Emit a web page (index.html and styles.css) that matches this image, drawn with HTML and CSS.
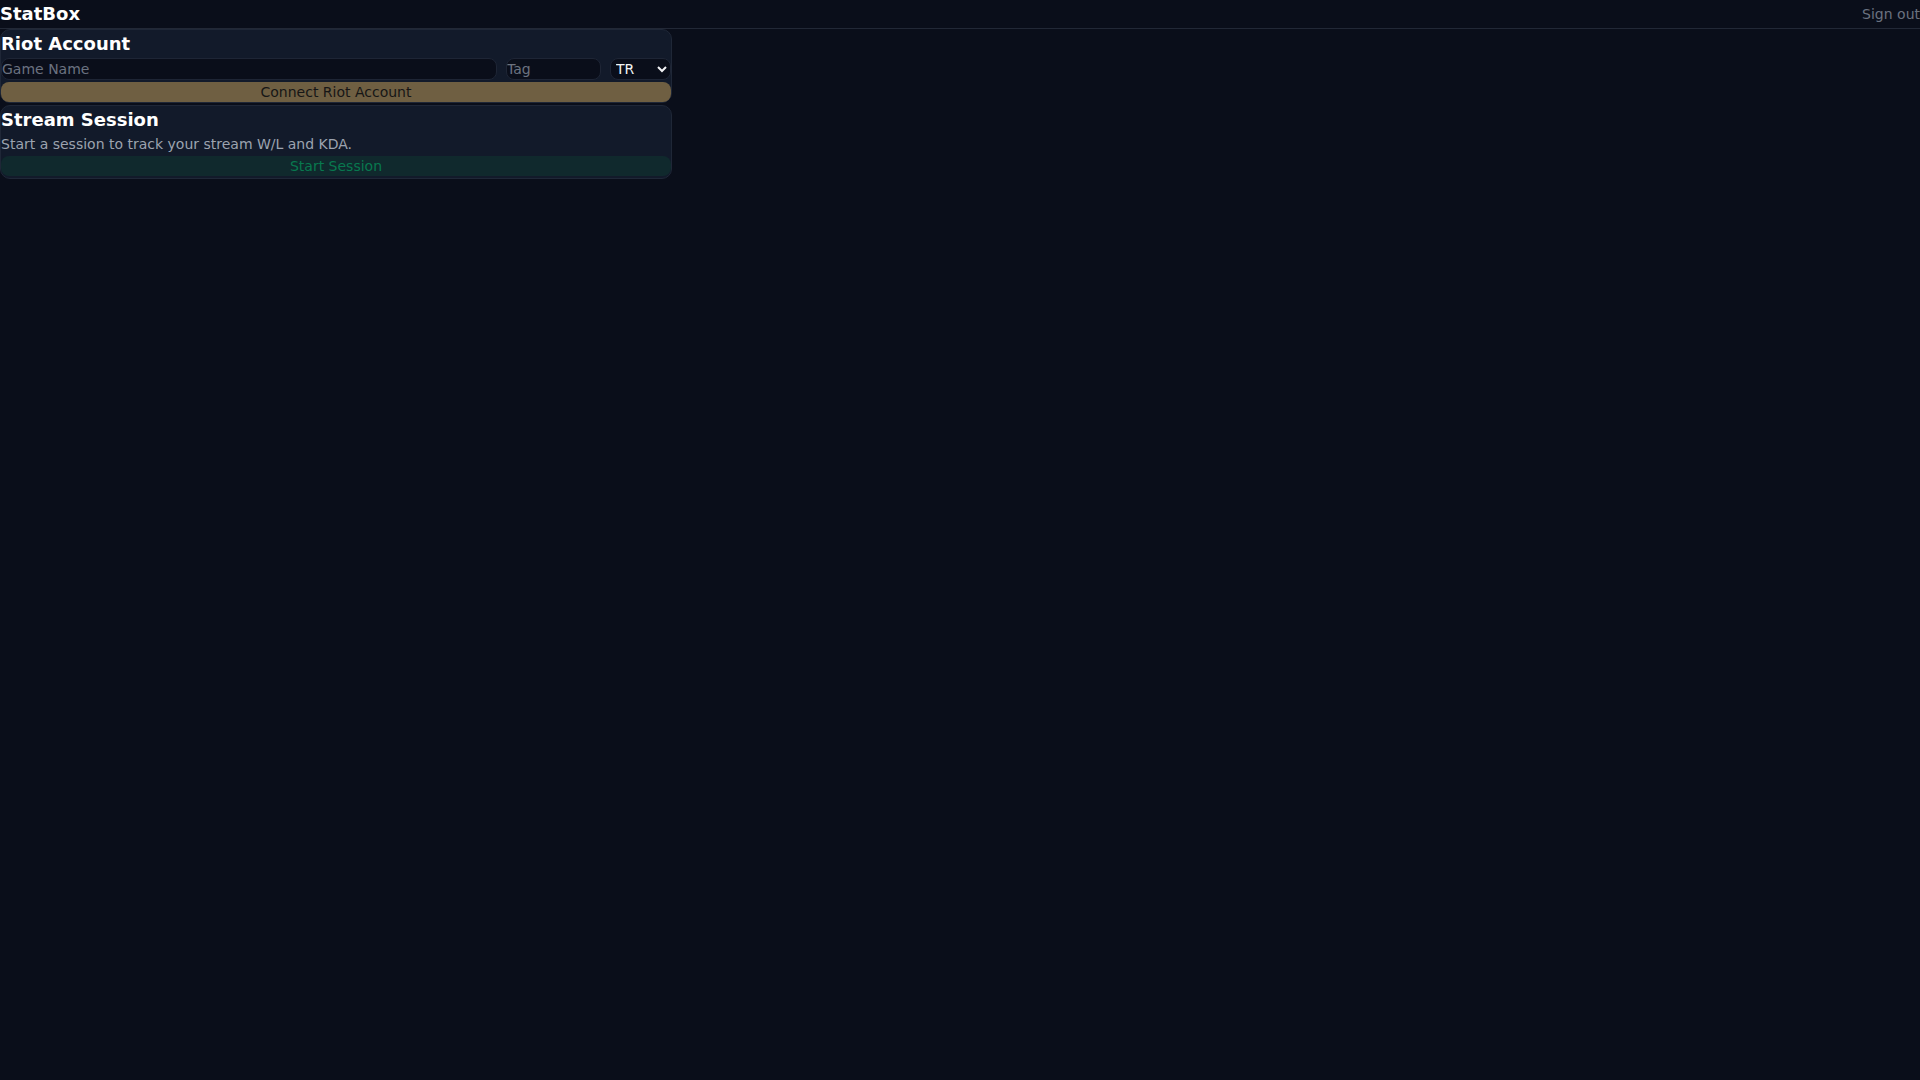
FILE: index.html
```html
<!DOCTYPE html>
<html lang="en">
<head>
<meta charset="utf-8">
<title>StatBox</title>
<link rel="stylesheet" href="styles.css">
</head>
<body>
<header class="topbar">
  <div class="brand">StatBox</div>
  <button class="signout" type="button">Sign out</button>
</header>
<main class="content">
  <section class="card">
    <h2 class="card-title">Riot Account</h2>
    <div class="account-row">
      <input class="field field-name" type="text" placeholder="Game Name">
      <input class="field field-tag" type="text" placeholder="Tag">
      <select class="field field-region">
        <option>TR</option>
        <option>EUW</option>
        <option>EUNE</option>
        <option>NA</option>
      </select>
    </div>
    <button class="btn btn-connect" type="button">Connect Riot Account</button>
  </section>
  <section class="card card-session">
    <h2 class="card-title">Stream Session</h2>
    <p class="card-desc">Start a session to track your stream W/L and KDA.</p>
    <button class="btn btn-start" type="button">Start Session</button>
  </section>
</main>
</body>
</html>
```
FILE: styles.css
```css
html {
  color-scheme: dark;
}
body {
  margin: 0;
  background: #0a0e1a;
  color: #f3f4f6;
  font-family: "DejaVu Sans", sans-serif;
  font-size: 14px;
  line-height: 20px;
  min-height: 1080px;
}
.topbar {
  display: flex;
  justify-content: space-between;
  align-items: center;
  height: 28px;
  border-bottom: 1px solid #222836;
}
.brand {
  font-size: 18px;
  line-height: 28px;
  font-weight: bold;
  color: #ffffff;
}
.signout {
  background: none;
  border: 0;
  padding: 0;
  margin: 0;
  font-family: inherit;
  font-size: 14px;
  line-height: 20px;
  color: #6b7280;
  cursor: pointer;
}
.content {
  width: 672px;
  display: flex;
  flex-direction: column;
  gap: 2px;
}
.card {
  background: #121a2a;
  border: 1px solid #1f2737;
  border-radius: 10px;
  display: flex;
  flex-direction: column;
}
.card-session {
  padding-bottom: 2px;
}
.card-title {
  margin: 0;
  font-size: 18px;
  line-height: 28px;
  font-weight: bold;
  color: #ffffff;
}
.card-desc {
  margin: 0;
  font-size: 14px;
  line-height: 20px;
  color: #9ca3af;
}
.account-row {
  display: flex;
  gap: 9px;
  height: 22px;
}
.field {
  box-sizing: border-box;
  height: 22px;
  margin: 0;
  padding: 0;
  border: 1px solid #1e2535;
  border-radius: 8px;
  background: #0a0e1a;
  color: #f3f4f6;
  font-family: inherit;
  font-size: 14px;
  line-height: 20px;
  outline: none;
}
.field::placeholder {
  color: #6b7280;
}
.field-name {
  flex: 1;
  min-width: 0;
}
.field-tag {
  width: 95px;
}
.field-region {
  width: 61px;
  padding-left: 1px;
}
.btn {
  margin-top: 2px;
  height: 20px;
  padding: 0;
  border: 0;
  border-radius: 8px;
  font-family: inherit;
  font-size: 14px;
  line-height: 20px;
  cursor: pointer;
}
.btn-connect {
  background: #6f5f42;
  color: #161616;
}
.btn-start {
  background: #10292d;
  color: #08784f;
}
```
